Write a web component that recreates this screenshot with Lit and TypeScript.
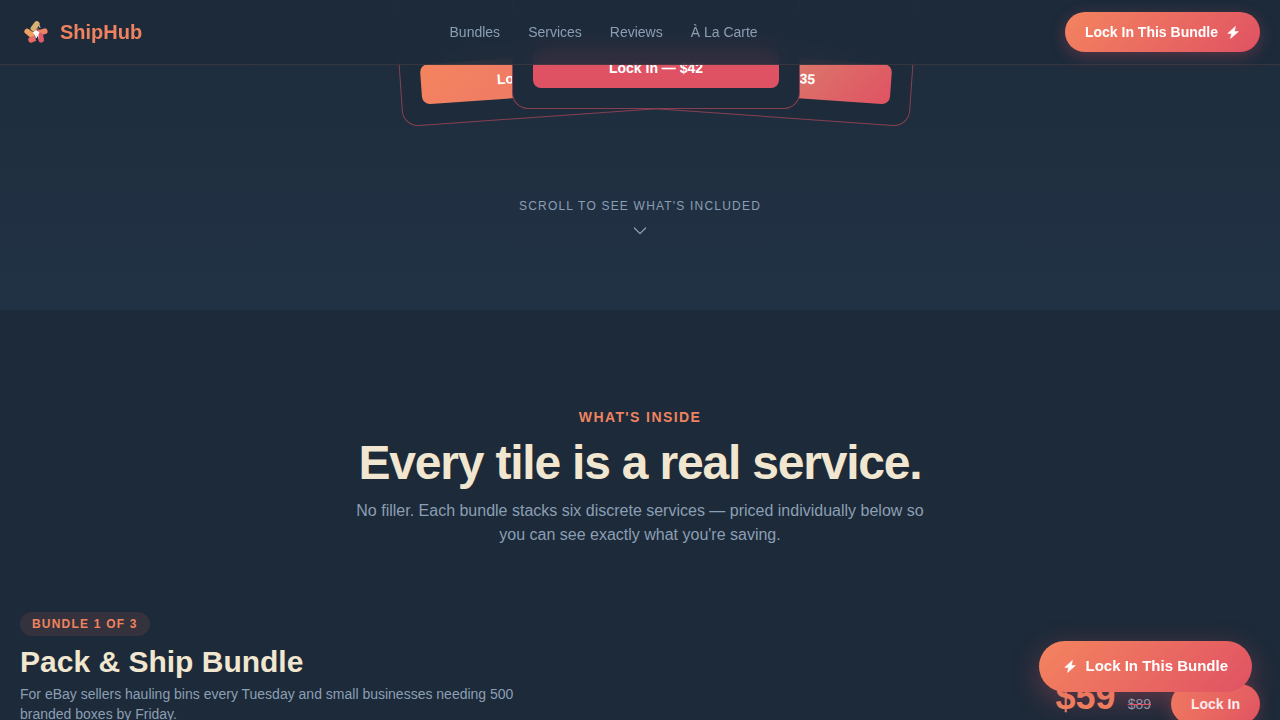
import { LitElement, html, css, svg } from "lit";
import { customElement } from "lit/decorators.js";

const bolt = svg`<path d="M9.4 1.4 L1.8 8.4 H5.6 L4.6 13.4 L12.4 6.6 H8.4 Z" fill="currentColor" stroke="currentColor" stroke-width="0.6" stroke-linejoin="round"/>`;

const boltIcon = html`<svg class="bolt" viewBox="0 0 14 14" aria-hidden="true">${bolt}</svg>`;

@customElement("app-root")
export class AppRoot extends LitElement {
  static styles = css`
    :host {
      display: block;
      height: 100vh;
      overflow: hidden;
      position: relative;
      background: #1d2a39;
      color: #8b9fb4;
      font-family: "Liberation Sans", Arial, sans-serif;
      font-size: 14px;
      line-height: 20px;
    }
    * {
      box-sizing: border-box;
    }
    h2,
    h3,
    p {
      margin: 0;
    }
    a {
      color: inherit;
      text-decoration: none;
    }
    button {
      font-family: inherit;
      font-weight: 700;
      font-size: 14px;
      line-height: 20px;
      color: #fff;
      border: 0;
      cursor: pointer;
    }
    .bar {
      position: fixed;
      inset: 0 0 auto 0;
      z-index: 10;
      display: flex;
      align-items: center;
      justify-content: space-between;
      padding: 12px 20px;
      background: rgba(29, 42, 58, 0.88);
      backdrop-filter: blur(12px);
      border-bottom: 1px solid rgba(244, 132, 95, 0.12);
    }
    .brand {
      display: flex;
      align-items: center;
      gap: 8px;
      font-size: 20px;
      line-height: 32px;
      font-weight: 700;
      color: #f0835f;
    }
    .logo {
      width: 32px;
      height: 32px;
    }
    .links {
      display: flex;
      gap: 28px;
    }
    .pill {
      display: flex;
      align-items: center;
      gap: 8px;
      padding: 10px 20px;
      border-radius: 999px;
      background: linear-gradient(135deg, #f4845f, #e05263);
      box-shadow: 0 4px 16px rgba(224, 82, 99, 0.3);
    }
    .bolt {
      width: 14px;
      height: 14px;
      flex: none;
    }
    .hero {
      overflow: hidden;
      padding-bottom: 68px;
      background: linear-gradient(180deg, #1e2c3b, #213245);
    }
    .deck {
      display: grid;
      grid-template-rows: 109px;
      justify-content: center;
      align-items: end;
      padding-left: 32px;
    }
    .card {
      grid-area: 1 / 1;
      width: 288px;
      height: 160px;
      display: flex;
      align-items: flex-end;
      padding: 20px;
      border: 1px solid rgba(224, 82, 99, 0.55);
      border-radius: 16px;
      background: #1e2b3a;
    }
    .card.left {
      transform: translate(-109px, 18px) rotate(-4deg);
      transform-origin: bottom left;
    }
    .card.right {
      transform: translate(109px, 18px) rotate(4deg);
      transform-origin: bottom right;
    }
    .card.front {
      z-index: 1;
    }
    .card button {
      flex: 1;
      padding: 10px;
      border-radius: 8px;
      background: #de5263;
    }
    .card.left button {
      background: linear-gradient(135deg, #f4845f, #e8706a);
    }
    .card.right button {
      background: linear-gradient(135deg, #d4a373, #e05263);
    }
    .cue {
      display: flex;
      flex-direction: column;
      align-items: center;
      gap: 8px;
      padding-top: 87px;
      font-size: 12px;
      letter-spacing: 0.1em;
      text-transform: uppercase;
    }
    .chevron {
      width: 18px;
      height: 18px;
    }
    .inside {
      padding: 97px 20px 0;
    }
    .intro {
      display: flex;
      flex-direction: column;
      align-items: center;
      text-align: center;
    }
    .eyebrow {
      font-weight: 700;
      letter-spacing: 0.1em;
      color: #f0835f;
      text-transform: uppercase;
    }
    .intro h2 {
      margin-top: 8px;
      font-size: 48px;
      line-height: 56px;
      letter-spacing: -0.025em;
      color: #f1e6cf;
    }
    .intro .lead {
      margin-top: 8px;
      max-width: 576px;
      font-size: 16px;
      line-height: 24px;
    }
    .bundle {
      display: flex;
      justify-content: space-between;
      align-items: flex-end;
      margin-top: 65px;
    }
    .about {
      max-width: 512px;
    }
    .tag {
      display: inline-block;
      padding: 2px 12px;
      border-radius: 999px;
      background: rgba(244, 132, 95, 0.1);
      color: #f0835f;
      font-size: 12px;
      font-weight: 700;
      letter-spacing: 0.1em;
      text-transform: uppercase;
    }
    .about h3 {
      margin: 8px 0 4px;
      font-size: 30px;
      line-height: 36px;
      color: #f1e6cf;
    }
    .buy {
      display: flex;
      align-items: baseline;
    }
    .price {
      font-size: 36px;
      line-height: 40px;
      font-weight: 700;
      color: #f0835f;
    }
    .was {
      margin: 0 20px 0 12px;
      text-decoration: line-through #e05263;
    }
    .floating {
      position: fixed;
      right: 28px;
      bottom: 28px;
      z-index: 9;
      padding: 16px 24px 17px;
      font-size: 15px;
      line-height: 18px;
      box-shadow: 0 8px 28px rgba(224, 82, 99, 0.35);
    }
  `;

  render() {
    return html`
      <header class="bar">
        <a class="brand" href="#top">
          <svg class="logo" viewBox="0 0 32 32" aria-hidden="true">
            <path d="M12 15 L17 11 L21 15 L20 22 H13 Z" fill="#8a5a58" />
            <g stroke-linecap="round" stroke-width="5.6">
              <path d="M16.8 8 L13.4 12.4" stroke="#d9b070" />
              <path d="M7.2 15.4 L11.4 18.8" stroke="#f0a062" />
              <path d="M19.8 16.6 L24.8 15.2" stroke="#ee8264" />
              <path d="M11 23.8 L14 22.6" stroke="#e86a66" />
              <path d="M20.4 19.6 L21.2 23.8" stroke="#e05b68" />
            </g>
            <path d="M12.8 16.6 L16 14 L19.4 16.4 L18.4 19 V22.4 H15 V19.4 Z" fill="#fff" />
            <path d="M15.2 20.4 H18 V24 H15.8 Z" fill="#1e2a3a" />
            <path d="M16.4 18.6 V22" stroke="#e8eef4" stroke-width="1.2" />
            <path d="M19.4 9.4 L20 11.8" stroke="#fff" stroke-width="0.8" />
          </svg>
          <span>ShipHub</span>
        </a>
        <nav class="links" aria-label="Main">
          <a href="#bundles">Bundles</a>
          <a href="#services">Services</a>
          <a href="#reviews">Reviews</a>
          <a href="#carte">À La Carte</a>
        </nav>
        <button class="pill" type="button">Lock In This Bundle ${boltIcon}</button>
      </header>

      <section class="hero" id="top">
        <div class="deck">
          <div class="card left"><button type="button">Lock In — $59</button></div>
          <div class="card right"><button type="button">Lock In — $35</button></div>
          <div class="card front"><button type="button">Lock In — $42</button></div>
        </div>
        <div class="cue">
          <span>Scroll to see what's included</span>
          <svg class="chevron" viewBox="0 0 18 18" fill="none" stroke="currentColor" stroke-width="1.3" stroke-linecap="round" stroke-linejoin="round" aria-hidden="true">
            <path d="M3.4 4 L9 9.6 L14.6 4" />
          </svg>
        </div>
      </section>

      <section class="inside" id="bundles">
        <div class="intro">
          <p class="eyebrow">What's inside</p>
          <h2>Every tile is a real service.</h2>
          <p class="lead">
            No filler. Each bundle stacks six discrete services — priced individually below so you can see exactly what
            you're saving.
          </p>
        </div>
        <article class="bundle">
          <div class="about">
            <span class="tag">Bundle 1 of 3</span>
            <h3>Pack &amp; Ship Bundle</h3>
            <p>For eBay sellers hauling bins every Tuesday and small businesses needing 500 branded boxes by Friday.</p>
          </div>
          <div class="buy">
            <span class="price">$59</span>
            <s class="was">$89</s>
            <button class="pill" type="button">Lock In</button>
          </div>
        </article>
      </section>

      <button class="pill floating" type="button">${boltIcon} Lock In This Bundle</button>
    `;
  }
}
